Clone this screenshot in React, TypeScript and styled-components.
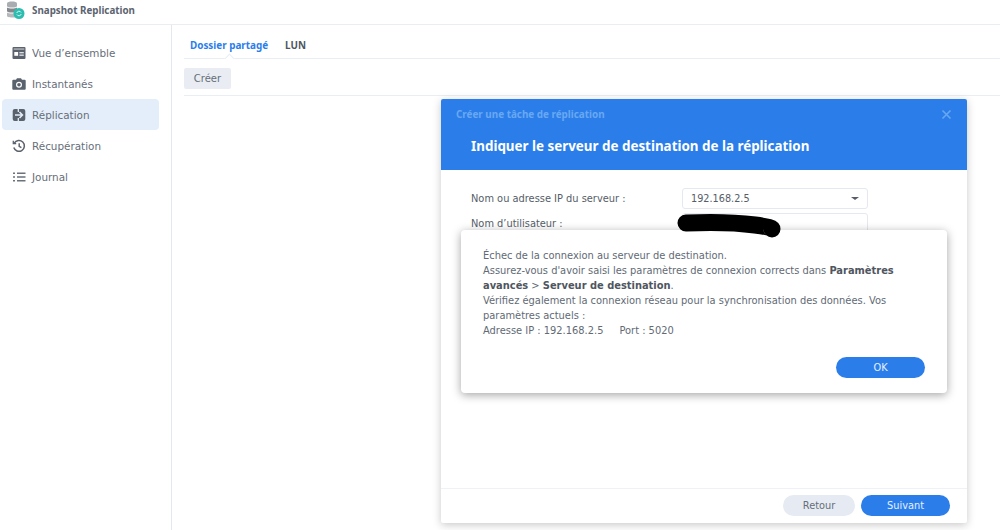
import styled, { createGlobalStyle } from 'styled-components';

const BLUE = '#2b7eea';
const TEXT = '#4b5563';
const LINE = '#e9eef3';
const ICON = '#5a626d';
const HEADING_FONT = '"Noto Sans", "DejaVu Sans", sans-serif';

const GlobalStyle = createGlobalStyle`
  html, body {
    margin: 0;
    padding: 0;
    background: #fff;
  }
  body {
    font-family: "DejaVu Sans", Verdana, sans-serif;
    font-size: 10px;
    color: ${TEXT};
  }
  * { box-sizing: border-box; }
`;

const Page = styled.div`
  width: 1000px;
  height: 530px;
  position: relative;
  overflow: hidden;
  display: flex;
  flex-direction: column;
`;

const TitleBar = styled.header`
  height: 25px;
  flex: none;
  display: flex;
  align-items: center;
  padding: 0 0 3px 6px;
  gap: 7px;
  border-bottom: 1px solid ${LINE};
`;

const AppName = styled.span`
  font-family: ${HEADING_FONT};
  font-size: 9.8px;
  font-weight: 700;
  color: #5b6470;
`;

const Body = styled.div`
  flex: 1;
  display: flex;
  min-height: 0;
`;

const Sidebar = styled.nav`
  width: 172px;
  flex: none;
  border-right: 1px solid #e4e8ec;
  padding: 12px 12px 0 2px;
  display: flex;
  flex-direction: column;
`;

const NavItem = styled.div<{ $active?: boolean }>`
  height: 31px;
  display: flex;
  align-items: center;
  gap: 6px;
  padding-left: 10px;
  border-radius: 4px;
  font-size: 10.4px;
  color: #666e79;
  background: ${(p) => (p.$active ? '#e4eefa' : 'transparent')};

  svg {
    width: 14px;
    height: 14px;
    flex: none;
  }
`;

const Main = styled.main`
  flex: 1;
  padding: 8px 0 0 12px;
  display: flex;
  flex-direction: column;
`;

const Tabs = styled.div`
  height: 26px;
  flex: none;
  display: flex;
  align-items: center;
  gap: 17px;
  padding: 0 0 2px 6px;
  border-bottom: 1px solid ${LINE};
  position: relative;
`;

const Tab = styled.span<{ $active?: boolean }>`
  font-family: ${HEADING_FONT};
  font-size: 9.9px;
  font-weight: 700;
  color: ${(p) => (p.$active ? BLUE : '#4f5660')};
`;

const Caret = styled.i`
  position: absolute;
  left: 42px;
  bottom: -1px;
  width: 7px;
  height: 7px;
  margin-bottom: -3px;
  background: #fff;
  border-top: 1px solid ${LINE};
  border-left: 1px solid ${LINE};
  transform: rotate(45deg);
`;

const Toolbar = styled.div`
  flex: none;
  height: 37px;
  padding-top: 9px;
  border-bottom: 1px solid ${LINE};
`;

const ToolButton = styled.button`
  width: 47px;
  height: 21px;
  border: 0;
  padding: 0;
  border-radius: 2px;
  background: #e9edf3;
  color: #666e79;
  font: 10px "DejaVu Sans", Verdana, sans-serif;
`;

const Wizard = styled.section`
  position: absolute;
  left: 441px;
  top: 99px;
  width: 526px;
  height: 424px;
  display: flex;
  flex-direction: column;
  background: #fff;
  border-radius: 2px;
  box-shadow: 0 2px 9px rgba(0, 0, 0, 0.22);
`;

const WizardHead = styled.div`
  flex: none;
  height: 71px;
  background: ${BLUE};
  border-radius: 2px 2px 0 0;
  padding: 8px 15px 0 15px;
  display: flex;
  flex-direction: column;
`;

const WizardTop = styled.div`
  display: flex;
  justify-content: space-between;
  align-items: center;
  height: 14px;
  font-family: ${HEADING_FONT};
  font-size: 9.9px;
  font-weight: 700;
  color: #68a8f2;

  svg {
    width: 11px;
    height: 11px;
  }
`;

const WizardTitle = styled.h1`
  margin: 16px 0 0 15px;
  font-family: ${HEADING_FONT};
  font-size: 13.4px;
  line-height: 18px;
  font-weight: 700;
  color: #fff;
`;

const WizardForm = styled.div`
  flex: 1;
  padding: 18px 0 0 30px;
  display: flex;
  flex-direction: column;
  gap: 4px;
`;

const FormRow = styled.div`
  display: flex;
  align-items: center;
  height: 21px;
`;

const FormLabel = styled.label`
  width: 211px;
  flex: none;
  font-size: 9.85px;
  color: #555d68;
`;

const Field = styled.div`
  width: 186px;
  height: 21px;
  border: 1px solid #e4e9ef;
  border-radius: 3px;
  padding: 0 8px;
  display: flex;
  align-items: center;
  justify-content: space-between;
  font-size: 9.7px;
  color: #555d68;
`;

const SelectArrow = styled.i`
  width: 0;
  height: 0;
  border-left: 4px solid transparent;
  border-right: 4px solid transparent;
  border-top: 3.500px solid #555d68;
`;

const WizardFoot = styled.div`
  flex: none;
  height: 35px;
  border-top: 1px solid #eef1f5;
  padding: 6px 17px 0 0;
  display: flex;
  justify-content: flex-end;
  gap: 6px;
`;

const Pill = styled.button<{ $primary?: boolean; $w: number }>`
  width: ${(p) => p.$w}px;
  height: 21px;
  padding: 0;
  border: 0;
  border-radius: 11px;
  background: ${(p) => (p.$primary ? BLUE : '#e6ebf3')};
  color: ${(p) => (p.$primary ? '#e6f0fd' : '#666e79')};
  font: 9.800px "DejaVu Sans", Verdana, sans-serif;
`;

const Scribble = styled.svg`
  position: absolute;
  left: 670px;
  top: 205px;
  width: 120px;
  height: 40px;
  z-index: 3;
`;

const Alert = styled.section`
  position: absolute;
  left: 461px;
  top: 230px;
  width: 486px;
  height: 163px;
  padding: 18px 22px 0 22px;
  display: flex;
  flex-direction: column;
  background: #fff;
  border-radius: 4px;
  box-shadow: 0 2px 10px rgba(0, 0, 0, 0.36);
  z-index: 2;
`;

const AlertText = styled.p`
  margin: 0;
  width: 420px;
  font-size: 9.9px;
  line-height: 15px;
  color: #626a75;

  b {
    font-weight: 700;
    color: #4f5660;
  }
`;

const PortLabel = styled.span`
  margin-left: 16px;
`;

const AlertFoot = styled.div`
  margin-top: 19px;
  display: flex;
  justify-content: flex-end;
  width: 442px;
`;

const OverviewIcon = () => (
  <svg viewBox="0 0 14 14">
    <rect x="0.500" y="1" width="13" height="12" rx="1" fill={ICON} />
    <rect x="1.700" y="2.300" width="10.600" height="1.500" fill="#fff" opacity="0.5" />
    <rect x="2.300" y="6" width="3.800" height="3.800" fill="#fff" />
    <rect x="7.400" y="6.200" width="4.400" height="1.100" fill="#fff" />
    <rect x="7.400" y="8.600" width="4.400" height="1.100" fill="#fff" />
  </svg>
);

const CameraIcon = () => (
  <svg viewBox="0 0 14 14">
    <path fill={ICON} d="M5 1.200h4l1 1.600h2.700a1 1 0 0 1 1 1v8a1 1 0 0 1-1 1H1.300a1 1 0 0 1-1-1v-8a1 1 0 0 1 1-1H4z" />
    <circle cx="7" cy="7.800" r="3" fill="#fff" />
    <circle cx="7" cy="7.800" r="1.800" fill={ICON} />
  </svg>
);

const ReplicationIcon = () => (
  <svg viewBox="0 0 14 14">
    <rect x="0.700" y="1" width="12.600" height="12" rx="2" fill={ICON} />
    <path fill="none" stroke="#e4eefa" strokeWidth="1.500" d="M3 7H10M7.500 4 10.500 7 7.500 10" />
    <path fill="none" stroke="#e4eefa" strokeWidth="1.300" d="M6.300 1V4M6.300 10V13" />
  </svg>
);

const HistoryIcon = () => (
  <svg viewBox="0 0 14 14" fill="none" stroke={ICON} strokeWidth="1.500">
    <path d="M2.300 4.200A5.400 5.400 0 1 1 1.800 8.500" />
    <path d="M1.300 1.800V4.700H4.200" strokeWidth="1.300" />
    <path d="M7.200 4.300V7.400L9.400 8.700" />
  </svg>
);

const ListIcon = () => (
  <svg viewBox="0 0 14 14" fill="#6b727c">
    <path d="M1 2.500h2v1.400H1zM5 2.500h8.500v1.400H5zM1 6.300h2v1.400H1zM5 6.300h8.500v1.400H5zM1 10.100h2v1.400H1zM5 10.100h8.500v1.400H5z" />
  </svg>
);

const AppLogo = () => (
  <svg width="19" height="19" viewBox="0 0 19 19">
    <path fill="#a9adb1" d="M1 2.500C1 1 3.500 .5 6 .5S11 1 11 2.500V5C11 6 8.500 6.500 6 6.500S1 6 1 5z" />
    <path fill="#85898e" d="M1 6.500C2 7.300 4 7.500 6 7.500S10 7.300 11 6.500V10C11 11 8.500 11.500 6 11.500S1 11 1 10z" />
    <path fill="#b5b8bb" d="M1 11.500C2 12.300 4 12.500 6 12.500S9 12.400 9 12.400V16.500C6 16.800 1 16.300 1 15z" />
    <circle cx="13" cy="12.500" r="5.500" fill="#2dbdb0" />
    <path fill="none" stroke="#d4f5f1" strokeWidth="1" d="M10.800 12A2.300 2.300 0 0 1 15.100 11.500M15.200 13A2.300 2.300 0 0 1 10.900 13.500" />
  </svg>
);

const CloseIcon = () => (
  <svg viewBox="0 0 11 11" fill="none" stroke="#68a8f2" strokeWidth="1.600">
    <path d="M1.500 1.500 9.500 9.500M9.500 1.500 1.500 9.500" />
  </svg>
);

const App = () => (
  <Page>
    <GlobalStyle />
    <TitleBar>
      <AppLogo />
      <AppName>Snapshot Replication</AppName>
    </TitleBar>
    <Body>
      <Sidebar>
        <NavItem><OverviewIcon />Vue d’ensemble</NavItem>
        <NavItem><CameraIcon />Instantanés</NavItem>
        <NavItem $active><ReplicationIcon />Réplication</NavItem>
        <NavItem><HistoryIcon />Récupération</NavItem>
        <NavItem><ListIcon />Journal</NavItem>
      </Sidebar>
      <Main>
        <Tabs>
          <Tab $active>Dossier partagé</Tab>
          <Tab>LUN</Tab>
          <Caret />
        </Tabs>
        <Toolbar>
          <ToolButton>Créer</ToolButton>
        </Toolbar>
      </Main>
    </Body>

    <Wizard>
      <WizardHead>
        <WizardTop>
          <span>Créer une tâche de réplication</span>
          <CloseIcon />
        </WizardTop>
        <WizardTitle>Indiquer le serveur de destination de la réplication</WizardTitle>
      </WizardHead>
      <WizardForm>
        <FormRow>
          <FormLabel>Nom ou adresse IP du serveur :</FormLabel>
          <Field>192.168.2.5<SelectArrow /></Field>
        </FormRow>
        <FormRow>
          <FormLabel>Nom d’utilisateur :</FormLabel>
          <Field />
        </FormRow>
      </WizardForm>
      <WizardFoot>
        <Pill $w={72}>Retour</Pill>
        <Pill $primary $w={89}>Suivant</Pill>
      </WizardFoot>
    </Wizard>

    <Scribble viewBox="0 0 120 40">
      <path d="M16 18C40 17 70 18 85 20S102 23 102 24" fill="none" stroke="#000" strokeWidth="17" strokeLinecap="round" />
    </Scribble>

    <Alert>
      <AlertText>
        Échec de la connexion au serveur de destination.<br />
        Assurez-vous d'avoir saisi les paramètres de connexion corrects dans <b>Paramètres</b> <b>avancés</b> &gt; <b>Serveur de destination</b>.<br />
        Vérifiez également la connexion réseau pour la synchronisation des données. Vos paramètres actuels :<br />
        Adresse IP : 192.168.2.5<PortLabel>Port : 5020</PortLabel>
      </AlertText>
      <AlertFoot>
        <Pill $primary $w={89}>OK</Pill>
      </AlertFoot>
    </Alert>
  </Page>
);

export default App;
